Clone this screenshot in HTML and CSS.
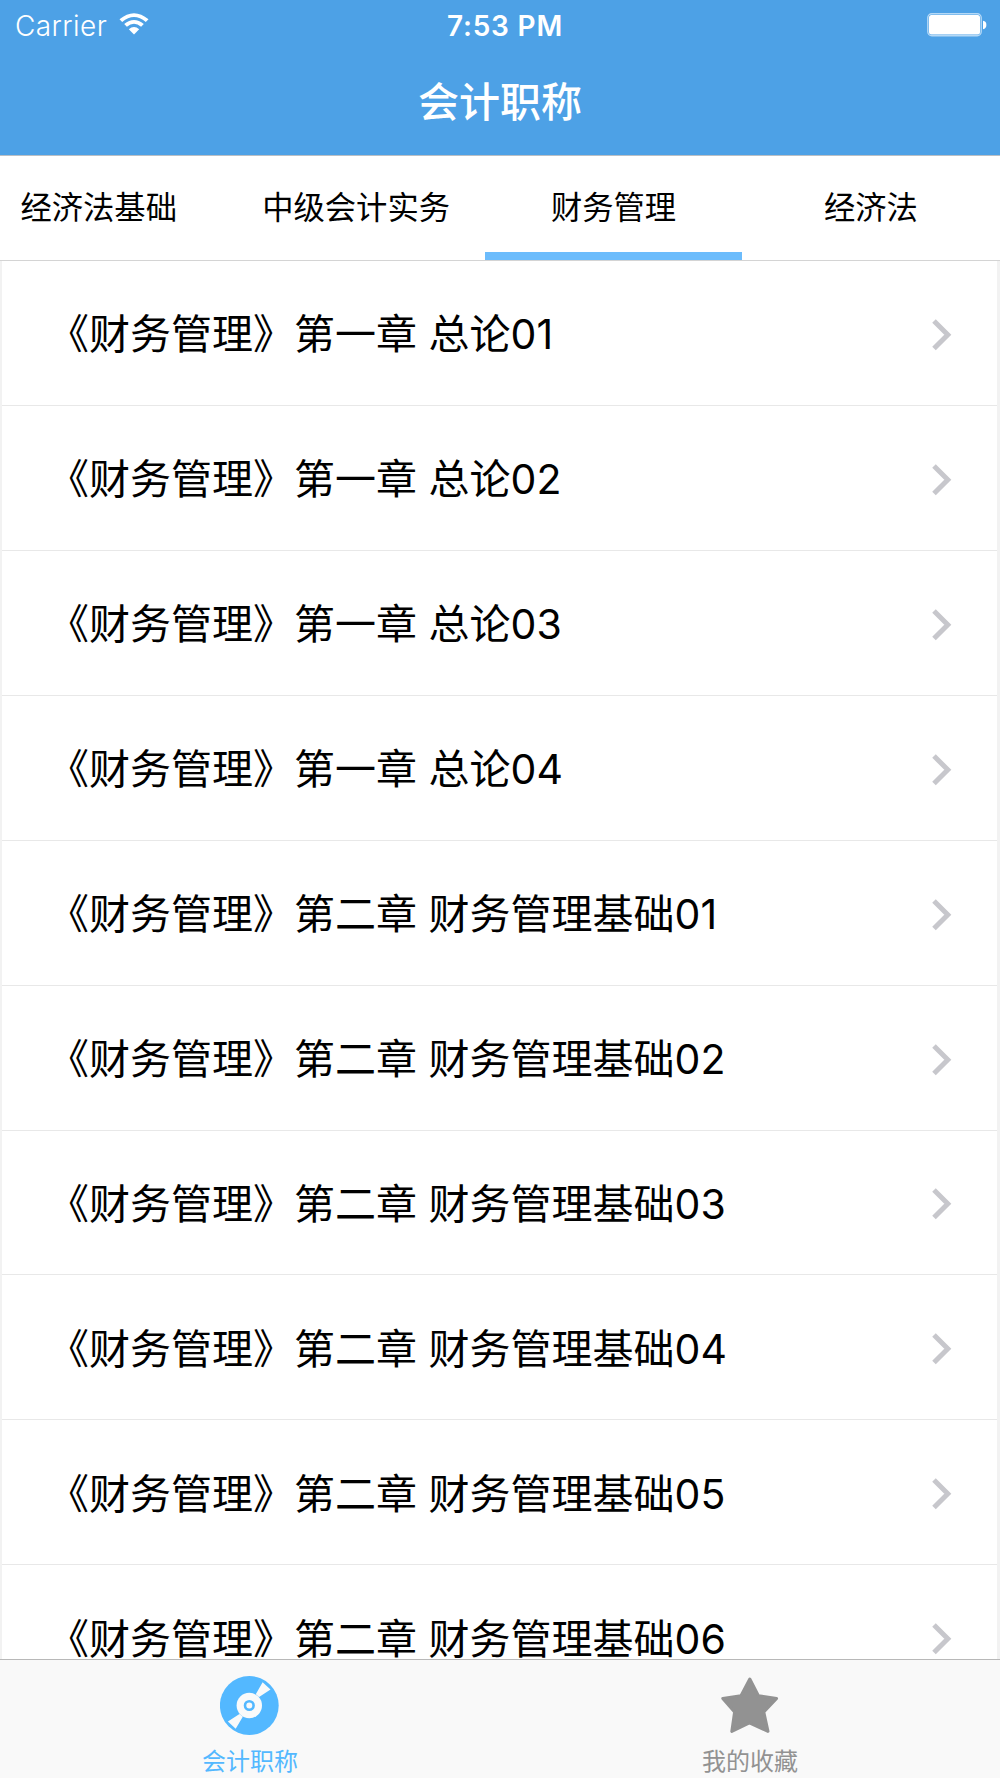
FILE: index.html
```html
<!DOCTYPE html>
<html lang="zh-CN">
<head>
    <meta charset="utf-8">
    <title>会计职称</title>
    <link rel="stylesheet" href="styles.css">
</head>
<body>
<div class="header">
    <div class="status">
        <div class="carrier">
            <span>Carrier</span>
            <svg class="wifi" width="30" height="22" viewBox="0 0 30 22">
                <path d="M0.5 6.2Q15 -5.8 29.5 6.2L26.8 8.9Q15 -0.8 3.2 8.9Z"/>
                <path d="M5.2 11Q15 2.8 24.8 11L22.1 13.7Q15 7.9 7.9 13.7Z"/>
                <path d="M9.8 16.2Q15 11.6 20.2 16.2L15 21.6Z"/>
            </svg>
        </div>
        <div class="time">7:53 PM</div>
        <div class="power">
            <svg width="60" height="24" viewBox="0 0 60 24">
                <rect x="0.8" y="0.8" width="53.4" height="22" rx="4" fill="none" stroke="#b5d9f6" stroke-width="1.4"/>
                <rect x="2" y="2" width="51" height="19.5" rx="2.5"/>
                <path d="M56 7.8Q59.4 8.4 59.4 12Q59.4 15.6 56 16.2Z"/>
            </svg>
        </div>
    </div>
    <h1>会计职称</h1>
</div>
<div class="tabs">
    <ul>
        <li>经济法基础</li>
        <li>中级会计实务</li>
        <li class="active">财务管理</li>
        <li>经济法</li>
    </ul>
</div>
<ul class="list">
    <li><span>《财务管理》第一章 总论01</span><svg class="arrow" viewBox="0 0 20 32"><path d="M2 2L15.8 15.8L2 29.6"/></svg></li>
    <li><span>《财务管理》第一章 总论02</span><svg class="arrow" viewBox="0 0 20 32"><path d="M2 2L15.8 15.8L2 29.6"/></svg></li>
    <li><span>《财务管理》第一章 总论03</span><svg class="arrow" viewBox="0 0 20 32"><path d="M2 2L15.8 15.8L2 29.6"/></svg></li>
    <li><span>《财务管理》第一章 总论04</span><svg class="arrow" viewBox="0 0 20 32"><path d="M2 2L15.8 15.8L2 29.6"/></svg></li>
    <li><span>《财务管理》第二章 财务管理基础01</span><svg class="arrow" viewBox="0 0 20 32"><path d="M2 2L15.8 15.8L2 29.6"/></svg></li>
    <li><span>《财务管理》第二章 财务管理基础02</span><svg class="arrow" viewBox="0 0 20 32"><path d="M2 2L15.8 15.8L2 29.6"/></svg></li>
    <li><span>《财务管理》第二章 财务管理基础03</span><svg class="arrow" viewBox="0 0 20 32"><path d="M2 2L15.8 15.8L2 29.6"/></svg></li>
    <li><span>《财务管理》第二章 财务管理基础04</span><svg class="arrow" viewBox="0 0 20 32"><path d="M2 2L15.8 15.8L2 29.6"/></svg></li>
    <li><span>《财务管理》第二章 财务管理基础05</span><svg class="arrow" viewBox="0 0 20 32"><path d="M2 2L15.8 15.8L2 29.6"/></svg></li>
    <li><span>《财务管理》第二章 财务管理基础06</span><svg class="arrow" viewBox="0 0 20 32"><path d="M2 2L15.8 15.8L2 29.6"/></svg></li>
</ul>
<div class="footer">
    <a class="active">
        <svg width="60" height="60" viewBox="0 0 60 60">
            <circle cx="29.3" cy="29.5" r="29.4" fill="#53b8ff"/>
            <path d="M42.6 6.2L50.5 13.5L39.1 21L35.8 18.3ZM15.7 52.8L7.9 45.5L19.5 38L22.8 40.7Z" fill="#fafafa"/>
            <circle cx="29.3" cy="29.5" r="12.7" fill="#fafafa"/>
            <circle cx="29.3" cy="29.5" r="4.3" fill="none" stroke="#53b8ff" stroke-width="2.6"/>
        </svg>
        <span>会计职称</span>
    </a>
    <a>
        <svg width="60" height="60" viewBox="0 0 60 60">
            <path d="M29.8 3L38.4 19.8L56.6 22.4L43.8 36L48 55.4L29.4 47L11.8 55.4L14.6 36L2.8 22.4L21 19.8Z" fill="#929292" stroke="#929292" stroke-width="3" stroke-linejoin="round"/>
        </svg>
        <span>我的收藏</span>
    </a>
</div>
</body>
</html>
```

FILE: styles.css
```css
* {
    margin: 0;
    padding: 0;
    box-sizing: border-box;
}

body {
    display: flex;
    flex-direction: column;
    height: 1778px;
    overflow: hidden;
    background: #fff;
    color: #000;
    font-family: Inter, "Noto Sans CJK SC", sans-serif;
}

ul {
    list-style: none;
}

.header {
    height: 156px;
    background: #4da1e6;
    border-bottom: 1px solid #b9bfc5;
    color: #fff;
}

.status {
    display: grid;
    grid-template-columns: 1fr auto 1fr;
    align-items: center;
    height: 50px;
    padding: 0 13px 0 15px;
    font-size: 28px;
}

.carrier {
    display: flex;
    align-items: center;
    gap: 12px;
    padding-top: 1px;
    font-weight: 350;
    letter-spacing: 0.4px;
}

.wifi {
    margin-top: -4px;
}

.status svg {
    fill: #fff;
}

.time {
    padding: 1px 0 0 8px;
    font-weight: 600;
    letter-spacing: 0.8px;
}

.power {
    display: flex;
    justify-content: flex-end;
}

.header h1 {
    height: 104px;
    line-height: 104px;
    text-align: center;
    font-size: 41px;
    font-weight: 500;
}

.tabs {
    height: 105px;
    overflow: hidden;
    border-bottom: 1px solid #d4d4d4;
}

.tabs ul {
    display: flex;
    width: 1030px;
    height: 105px;
    margin-left: -30px;
}

.tabs li {
    width: 257.4px;
    line-height: 105px;
    text-align: center;
    font-size: 31.3px;
}

.tabs .active {
    border-bottom: 9px solid #6cbcfc;
}

.list {
    flex: 1;
    overflow: hidden;
    border: solid #f2f2f2;
    border-width: 0 3px 0 2px;
}

.list li {
    display: flex;
    align-items: center;
    justify-content: space-between;
    height: 144.93px;
    padding: 0 45px 0 46px;
    border-bottom: 1px solid #e8e8e8;
    font-size: 41px;
}

.list span {
    padding-top: 3px;
    line-height: 48px;
}

.arrow {
    width: 20px;
    height: 32px;
    margin-top: 4px;
    fill: none;
    stroke: #c7c7cc;
    stroke-width: 5;
}

.footer {
    display: flex;
    height: 119px;
    background: #f9f9f9;
    border-top: 1px solid #b8b8b8;
}

.footer a {
    display: flex;
    flex: 1;
    flex-direction: column;
    align-items: center;
    padding-top: 16px;
    color: #929292;
    font-size: 24px;
}

.footer svg {
    flex-shrink: 0;
}

.footer span {
    margin-top: 10px;
    line-height: 32px;
}

.footer .active {
    color: #53b8ff;
}
```
